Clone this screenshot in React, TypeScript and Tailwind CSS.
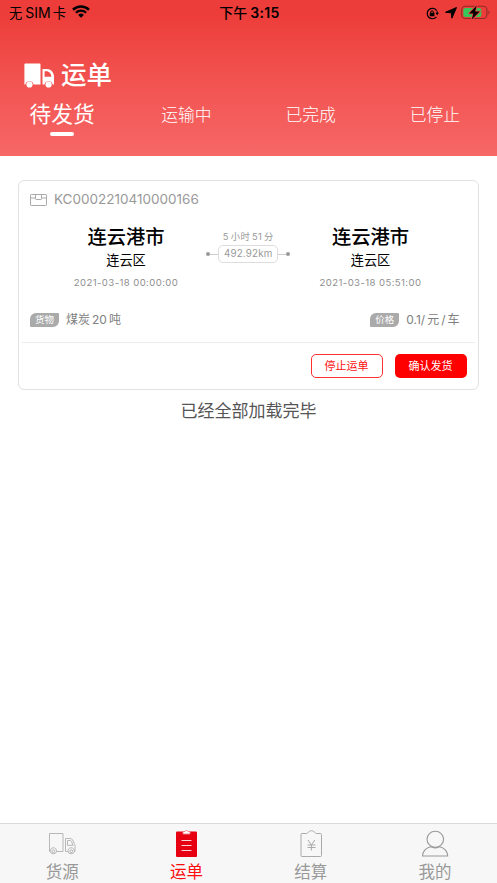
import type { ReactNode } from 'react';

const tabs = ['待发货', '运输中', '已完成', '已停止'];

function StatusBar() {
    return (
        <div className="grid h-[26px] grid-cols-3 items-center pl-[9px] pr-[7px] text-black">
            <div className="flex items-center">
                <span className="text-[13.3px] leading-[26px]">无</span>
                <span className="ml-[3px] mr-[2px] text-[14px] leading-[26px]">SIM</span>
                <span className="text-[13.3px] leading-[26px]">卡</span>
                <svg className="ml-[6px] -mt-[3px]" width="18" height="13" viewBox="0 0 18 13">
                    <path d="M1 4.8a11.5 11.5 0 0 1 16 0" fill="none" stroke="#000" strokeWidth="2.6" />
                    <path d="M3.9 7.8a7.3 7.3 0 0 1 10.2 0" fill="none" stroke="#000" strokeWidth="2.2" />
                    <path d="M9 12.7 6.1 9.9a4.2 4.2 0 0 1 5.8 0z" fill="#000" />
                </svg>
            </div>
            <div className="flex items-center justify-center gap-[3px] leading-[26px]">
                <span className="text-[14px] font-medium">下午</span>
                <span className="text-[14px] font-semibold tracking-[0.3px]">3:15</span>
            </div>
            <div className="flex items-center justify-end">
                <svg width="13" height="13" viewBox="0 0 13 13">
                    <path d="M10.7 3.6A5.2 5.2 0 1 0 10.4 9.9" fill="none" stroke="#000" strokeWidth="1.2" />
                    <path d="M10.9 4.2q.5 1 .4 2" fill="none" stroke="#000" strokeWidth="1.2" />
                    <path d="M9.5 5.8H13l-1.800 2.500z" fill="#000" />
                    <rect x="3.800" y="5.800" width="4.600" height="3.500" rx="0.500" fill="#000" />
                    <path d="M4.800 6V5a1.300 1.300 0 0 1 2.600 0v1" fill="none" stroke="#000" strokeWidth="0.900" />
                </svg>
                <svg className="ml-[6px]" width="12" height="12" viewBox="0 0 12 12">
                    <path d="M11.500.5 6.900 11.200 6.300 5.800.5 5.300z" fill="#000" stroke="#000" strokeWidth="1" strokeLinejoin="round" />
                </svg>
                <svg className="ml-[4px] -mt-[1px] overflow-visible" width="29" height="15" viewBox="0 0 29 15">
                    <rect x="0.7" y="1.3" width="25.2" height="12.2" rx="3.6" fill="none" stroke="#8f2b29" strokeWidth="1.1" />
                    <rect x="2.3" y="2.900" width="18" height="9" rx="2" fill="#35c759" />
                    <path d="M27.400 5.400v4.200c1.400-.6 1.400-3.600 0-4.200z" fill="#8f2b29" />
                    <path
                        d="M15.700.6 8.100 8.400h4.300l-1.700 6 8-7.800h-4.600z"
                        fill="#000"
                        stroke="#ee4340"
                        strokeWidth="1.800"
                        strokeLinejoin="round"
                        paintOrder="stroke"
                    />
                </svg>
            </div>
        </div>
    );
}

function Header() {
    return (
        <header className="h-[156px] shrink-0 bg-linear-to-b from-[#ed3d3a] from-10% to-[#f66767] text-white">
            <StatusBar />
            <div className="mt-[31px] flex h-[36px] items-center pl-[24px]">
                <svg width="31" height="25" viewBox="0 0 31 25">
                    <path d="M1.3.5h14.200c.6 0 1 .4 1 1v20H9.600a4.200 4.200 0 0 0-8.200 0H.4V1.500c0-.6.400-1 .9-1z" fill="#fff" />
                    <path
                        d="M18.500 6h4.200c4.400 0 7.300 3.600 7.300 7.600v7.900h-1.300a4.200 4.200 0 0 0-8.200 0h-2zM20.600 8.300v5.400h6.800c-.3-3-2.300-5.400-5-5.400z"
                        fill="#fff"
                        fillRule="evenodd"
                    />
                    <circle cx="5.500" cy="21.500" r="3.100" fill="#fff" />
                    <circle cx="24.600" cy="21.500" r="3.100" fill="#fff" />
                </svg>
                <h1 className="ml-[6px] text-[25.500px] font-medium leading-[36px]">运单</h1>
            </div>
            <nav className="grid h-[43px] grid-cols-4">
                {tabs.map((tab, i) => (
                    <div key={tab} className="flex flex-col items-center">
                        {i === 0 ? (
                            <>
                                <span className="mt-[1px] text-[21.700px] leading-[40px]">{tab}</span>
                                <span className="-mt-[2px] h-[4px] w-[24px] shrink-0 rounded-full bg-white" />
                            </>
                        ) : (
                            <span className="mt-[1px] text-[16.800px] font-light leading-[42px]">{tab}</span>
                        )}
                    </div>
                ))}
            </nav>
        </header>
    );
}

function Place({ city, area, time }: { city: string; area: string; time: string }) {
    return (
        <div className="flex w-[120px] flex-col items-center">
            <span className="text-[19.300px] font-medium leading-[26px] text-black">{city}</span>
            <span className="text-[13.200px] leading-[21px] text-black">{area}</span>
            <span className="mt-[2px] text-[9.600px] leading-[20px] tracking-[0.400px] whitespace-nowrap text-[#909090]">{time}</span>
        </div>
    );
}

function Tag({ children }: { children: ReactNode }) {
    return (
        <span className="flex h-[14px] w-[29px] items-center justify-center rounded-tl-[6px] rounded-br-[6px] rounded-tr-[1px] rounded-bl-[1px] bg-[#aaa] text-[9.500px] leading-[14px] text-white">
            {children}
        </span>
    );
}

function OrderCard() {
    return (
        <section className="ml-[18px] mr-[18.500px] mt-[24px] h-[210px] shrink-0 rounded-[6px] border border-[#e2e2e2] bg-white">
            <div className="flex h-[37px] items-center pl-[11px]">
                <svg width="17" height="12" viewBox="0 0 17 12" fill="none" stroke="#aaa" strokeWidth="1">
                    <path d="M.5 1.200q0-.7.700-.7h14.600q.7 0 .7.700v9.600q0 .7-.7.700H1.200q-.7 0-.7-.7zM.5 4h5m6 0h5M5.500.5v4.300q0 .7.700.7h4.600q.7 0 .7-.7V.5" />
                </svg>
                <span className="ml-[7px] text-[13.500px] text-[#999]">KC0002210410000166</span>
            </div>
            <div className="flex justify-between pl-[47px] pr-[47px] pt-[6px]">
                <Place city="连云港市" area="连云区" time="2021-03-18 00:00:00" />
                <div className="flex flex-col items-center pt-[6px] text-[#999]">
                    <div className="flex gap-[2px] text-[9.300px] leading-[14px] tracking-[0.300px]">
                        <span>5</span>
                        <span>小时</span>
                        <span>51</span>
                        <span>分</span>
                    </div>
                    <div className="mt-[1px] flex items-center">
                        <span className="size-[4px] rounded-full bg-[#999]" />
                        <span className="h-px w-[8px] bg-[#ccc]" />
                        <span className="flex h-[18px] w-[60px] items-center justify-center rounded-[5px] border border-[#ddd] pt-px text-[9.800px] tracking-[0.200px]">492.92km</span>
                        <span className="h-px w-[8px] bg-[#ccc]" />
                        <span className="size-[4px] rounded-full bg-[#999]" />
                    </div>
                </div>
                <Place city="连云港市" area="连云区" time="2021-03-18 05:51:00" />
            </div>
            <div className="mt-[16px] flex h-[22px] items-center justify-between pl-[11px] pr-[18px] text-[12px] text-[#808080]">
                <div className="flex items-center">
                    <Tag>货物</Tag>
                    <span className="ml-[7px]">煤炭</span>
                    <span className="mx-[2px]">20</span>
                    <span>吨</span>
                </div>
                <div className="flex items-center">
                    <Tag>价格</Tag>
                    <span className="ml-[7px]">0.1/</span>
                    <span className="ml-[2px]">元</span>
                    <span className="mx-[2px]">/</span>
                    <span>车</span>
                </div>
            </div>
            <div className="mx-[3px] mt-[11px] border-t border-[#ececec]" />
            <div className="mt-[11px] flex justify-end gap-[12px] pr-[11px]">
                <button className="h-[24px] w-[72px] rounded-[5px] border border-[#ff3030] text-[11px] leading-[22px] text-[#ff1010]">停止运单</button>
                <button className="h-[24px] w-[72px] rounded-[5px] bg-[#fe0000] text-[11px] leading-[24px] text-white">确认发货</button>
            </div>
        </section>
    );
}

const TruckIcon = () => (
    <svg width="28" height="28" viewBox="0 0 28 28" fill="none" stroke="#b0b0b0" strokeWidth="0.900">
        <path d="M2.200 21.500H1.500v-18h13.500v18H8.500M20 21.500h-2.500v-13h4.700q1.700 0 2.400 1.500l1.700 3.700q.7 1 .7 2v5.800h-.5M19.500 10.500v4.800h5.600l-1.600-3.700q-.5-1.100-1.500-1.100z" />
        <path d="M2.200 21.500a3.200 3.200 0 1 1 6.300 0a3.200 2.800 0 0 1-6.300 0zM20 21.500a3.200 3.200 0 1 1 6.300 0a3.200 2.800 0 0 1-6.300 0z" />
        <circle cx="5.300" cy="21.200" r="1.400" />
        <circle cx="23.200" cy="21.200" r="1.400" />
    </svg>
);

const OrderIcon = () => (
    <svg width="28" height="28" viewBox="0 0 28 28">
        <rect x="4" y="1.500" width="21" height="25.500" rx="1" fill="#e60012" />
        <path d="M11 1.500h2q.3-1 1.500-1t1.500 1h2v2.500h-7z" fill="#fff" stroke="#f2808a" strokeWidth="0.900" strokeLinejoin="round" />
        <path d="M9.500 10.500h10M9.500 15.500h10M9.500 20.500h10" stroke="#fbd5d8" strokeWidth="1" />
    </svg>
);

const BillIcon = () => (
    <svg width="28" height="28" viewBox="0 0 28 28" fill="none" stroke="#aaa" strokeWidth="1">
        <path d="M5 3.500h4.500c1.500 0 1-1 1.800-1.300 1 0 1-1.500 3.200-1.500s2.200 1.500 3.200 1.500c.8.3.3 1.300 1.800 1.300h4q1 0 1 1v21q0 1-1 1H5q-1 0-1-1v-21q0-1 1-1z" />
        <path d="m11 10 3.400 5 3.400-5M14.400 15v5.500M10.500 15h8M10.500 17.500h8" />
    </svg>
);

const MineIcon = () => (
    <svg width="28" height="28" viewBox="0 0 28 28" fill="none" stroke="#999" strokeWidth="1.100">
        <ellipse cx="14.300" cy="9.200" rx="8.300" ry="8" />
        <path d="M9.500 16.700C5 18 1.800 21.500 1.500 26h25.200c-.3-4.500-3.300-8-7.800-9.300-1 0-2 1.200-4.700 1.200s-3.700-1.200-4.700-1.200z" />
    </svg>
);

const menus = [
    { name: '货源', icon: <TruckIcon /> },
    { name: '运单', icon: <OrderIcon />, active: true },
    { name: '结算', icon: <BillIcon /> },
    { name: '我的', icon: <MineIcon /> },
];

function TabBar() {
    return (
        <footer className="mt-auto grid h-[60px] shrink-0 grid-cols-4 border-t border-[#dadada] bg-[#f7f7f7]">
            {menus.map((m) => (
                <div key={m.name} className="flex flex-col items-center pt-[6px]">
                    {m.icon}
                    <span className={m.active ? 'mt-[2px] text-[16.500px] leading-[25px] text-[#ff0d0d]' : 'mt-[2px] text-[16.500px] leading-[25px] text-[#999]'}>
                        {m.name}
                    </span>
                </div>
            ))}
        </footer>
    );
}

export default function App() {
    return (
        <div className="flex h-[883px] w-[497px] flex-col overflow-hidden bg-white font-['Inter','Noto_Sans_CJK_SC',sans-serif]">
            <Header />
            <OrderCard />
            <p className="mt-[8px] text-center text-[17px] leading-[26px] text-[#555]">已经全部加载完毕</p>
            <TabBar />
        </div>
    );
}
